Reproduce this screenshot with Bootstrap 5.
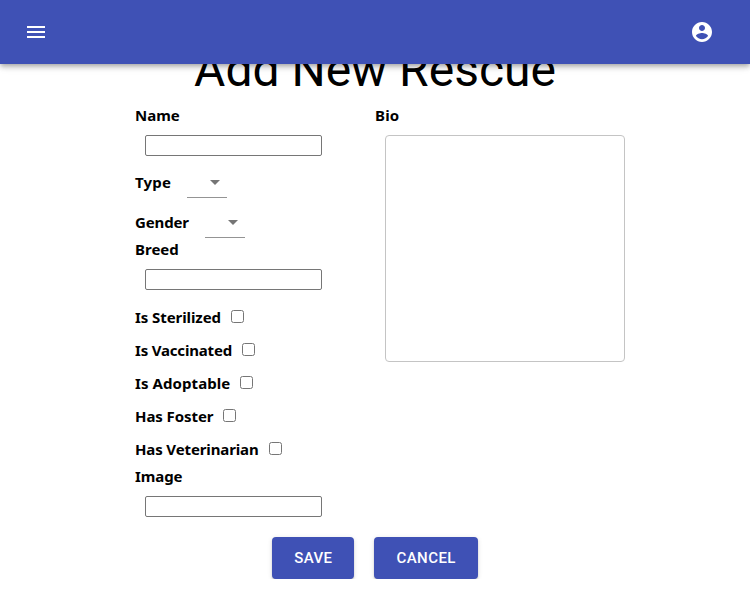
<!DOCTYPE html>
<html lang="en">
<head>
<meta charset="utf-8">
<meta name="viewport" content="width=device-width, initial-scale=1">
<title>Add New Rescue</title>
<link href="https://cdn.jsdelivr.net/npm/bootstrap@5.3.0/dist/css/bootstrap.min.css" rel="stylesheet">
<style>
  body { font-family: "Noto Sans", "Open Sans", sans-serif; color: #000; overflow: hidden; }
  .top-bar { height: 64px; padding: 0 36px 0 24px; background: #3f51b5;
    box-shadow: 0 2px 4px -1px rgba(0,0,0,.2), 0 4px 5px 0 rgba(0,0,0,.14), 0 1px 10px 0 rgba(0,0,0,.12); }
  .icon-button { padding: 0; line-height: 0; border: 0; background: none; }
  .icon-button svg { width: 24px; height: 24px; fill: #fff; }
  .page-title { font: 400 48px/56px Roboto, sans-serif; padding-top: 42px; height: 104px; margin: 0; }
  .rescue-form { width: 480px; }
  .form-column { width: 240px; flex: none; }
  .field-label { display: block; height: 21px; font-weight: 700; font-size: 15px; line-height: 23px; white-space: nowrap; }
  .text-box { display: block; width: 177px; height: 21px; margin: 10px; border: 1px solid #767676; border-radius: 2px; padding: 1px 2px; }
  .select-row { height: 40px; gap: 16px; padding-top: 5px; }
  .select-row.compact { height: 32px; }
  .select-box { width: 40px; height: 32px; margin-top: -5px; border: 0; border-bottom: 1px solid #949494; background: none; padding: 0 0 0 16px; line-height: 0; }
  .select-box svg { width: 24px; height: 24px; fill: #757575; }
  .check-row { height: 33px; gap: 10px; padding-top: 6px; }
  .check-box { width: 13px; height: 13px; margin: 4px 0 0; }
  .tight { letter-spacing: -.08px; }
  .tighter { letter-spacing: -.13px; }
  .tightest { letter-spacing: -.18px; }
  .loose { letter-spacing: .08px; }
  .looser { letter-spacing: .2px; }
  .bio-box { display: block; width: 240px; height: 227px; margin: 10px; border: 1px solid #c4c4c4; border-radius: 4px; resize: none; }
  .actions { gap: 20px; padding-top: 10px; }
  .action { height: 42px; padding: 0 22px; border: 0; border-radius: 4px; background: #3f51b5; color: #fff; font: 500 15px/42px Roboto, sans-serif; letter-spacing: .43px;
    box-shadow: 0 3px 1px -2px rgba(0,0,0,.2), 0 2px 2px 0 rgba(0,0,0,.14), 0 1px 5px 0 rgba(0,0,0,.12); }
</style>
</head>
<body class="bg-white">
<header class="top-bar fixed-top d-flex align-items-center justify-content-between">
  <button class="icon-button" aria-label="Menu"><svg viewBox="0 0 24 24"><path d="M3 18h18v-2H3v2zm0-5h18v-2H3v2zm0-7v2h18V6H3z"/></svg></button>
  <button class="icon-button" aria-label="Account"><svg viewBox="0 0 24 24"><path d="M12 2C6.48 2 2 6.48 2 12s4.48 10 10 10 10-4.48 10-10S17.52 2 12 2zm0 3c1.66 0 3 1.34 3 3s-1.34 3-3 3-3-1.34-3-3 1.34-3 3-3zm0 14.2c-2.5 0-4.71-1.28-6-3.22.03-1.99 4-3.08 6-3.08 1.99 0 5.97 1.09 6 3.08-1.29 1.94-3.5 3.22-6 3.22z"/></svg></button>
</header>
<main>
  <h1 class="page-title text-center">Add New Rescue</h1>
  <form class="rescue-form mx-auto d-flex">
    <div class="form-column">
      <label class="field-label" for="name">Name</label>
      <input class="text-box" id="name" type="text">
      <div class="select-row d-flex"><span class="field-label looser">Type</span>
        <button type="button" class="select-box d-flex align-items-center" aria-label="Type"><svg viewBox="0 0 24 24"><path d="M7 10l5 5 5-5z"/></svg></button></div>
      <div class="select-row compact d-flex"><span class="field-label tighter">Gender</span>
        <button type="button" class="select-box d-flex align-items-center" aria-label="Gender"><svg viewBox="0 0 24 24"><path d="M7 10l5 5 5-5z"/></svg></button></div>
      <label class="field-label" for="breed">Breed</label>
      <input class="text-box" id="breed" type="text">
      <div class="check-row d-flex"><label class="field-label tight" for="c1">Is Sterilized</label><input class="check-box" id="c1" type="checkbox"></div>
      <div class="check-row d-flex"><label class="field-label tightest" for="c2">Is Vaccinated</label><input class="check-box" id="c2" type="checkbox"></div>
      <div class="check-row d-flex"><label class="field-label loose" for="c3">Is Adoptable</label><input class="check-box" id="c3" type="checkbox"></div>
      <div class="check-row d-flex"><label class="field-label tight" for="c4">Has Foster</label><input class="check-box" id="c4" type="checkbox"></div>
      <div class="check-row d-flex"><label class="field-label tighter" for="c5">Has Veterinarian</label><input class="check-box" id="c5" type="checkbox"></div>
      <label class="field-label tight" for="image">Image</label>
      <input class="text-box" id="image" type="text">
    </div>
    <div class="form-column">
      <label class="field-label looser" for="bio">Bio</label>
      <textarea class="bio-box" id="bio"></textarea>
    </div>
  </form>
  <div class="actions d-flex justify-content-center">
    <button class="action">SAVE</button>
    <button class="action">CANCEL</button>
  </div>
</main>
<script src="https://cdn.jsdelivr.net/npm/bootstrap@5.3.0/dist/js/bootstrap.bundle.min.js"></script>
</body>
</html>
